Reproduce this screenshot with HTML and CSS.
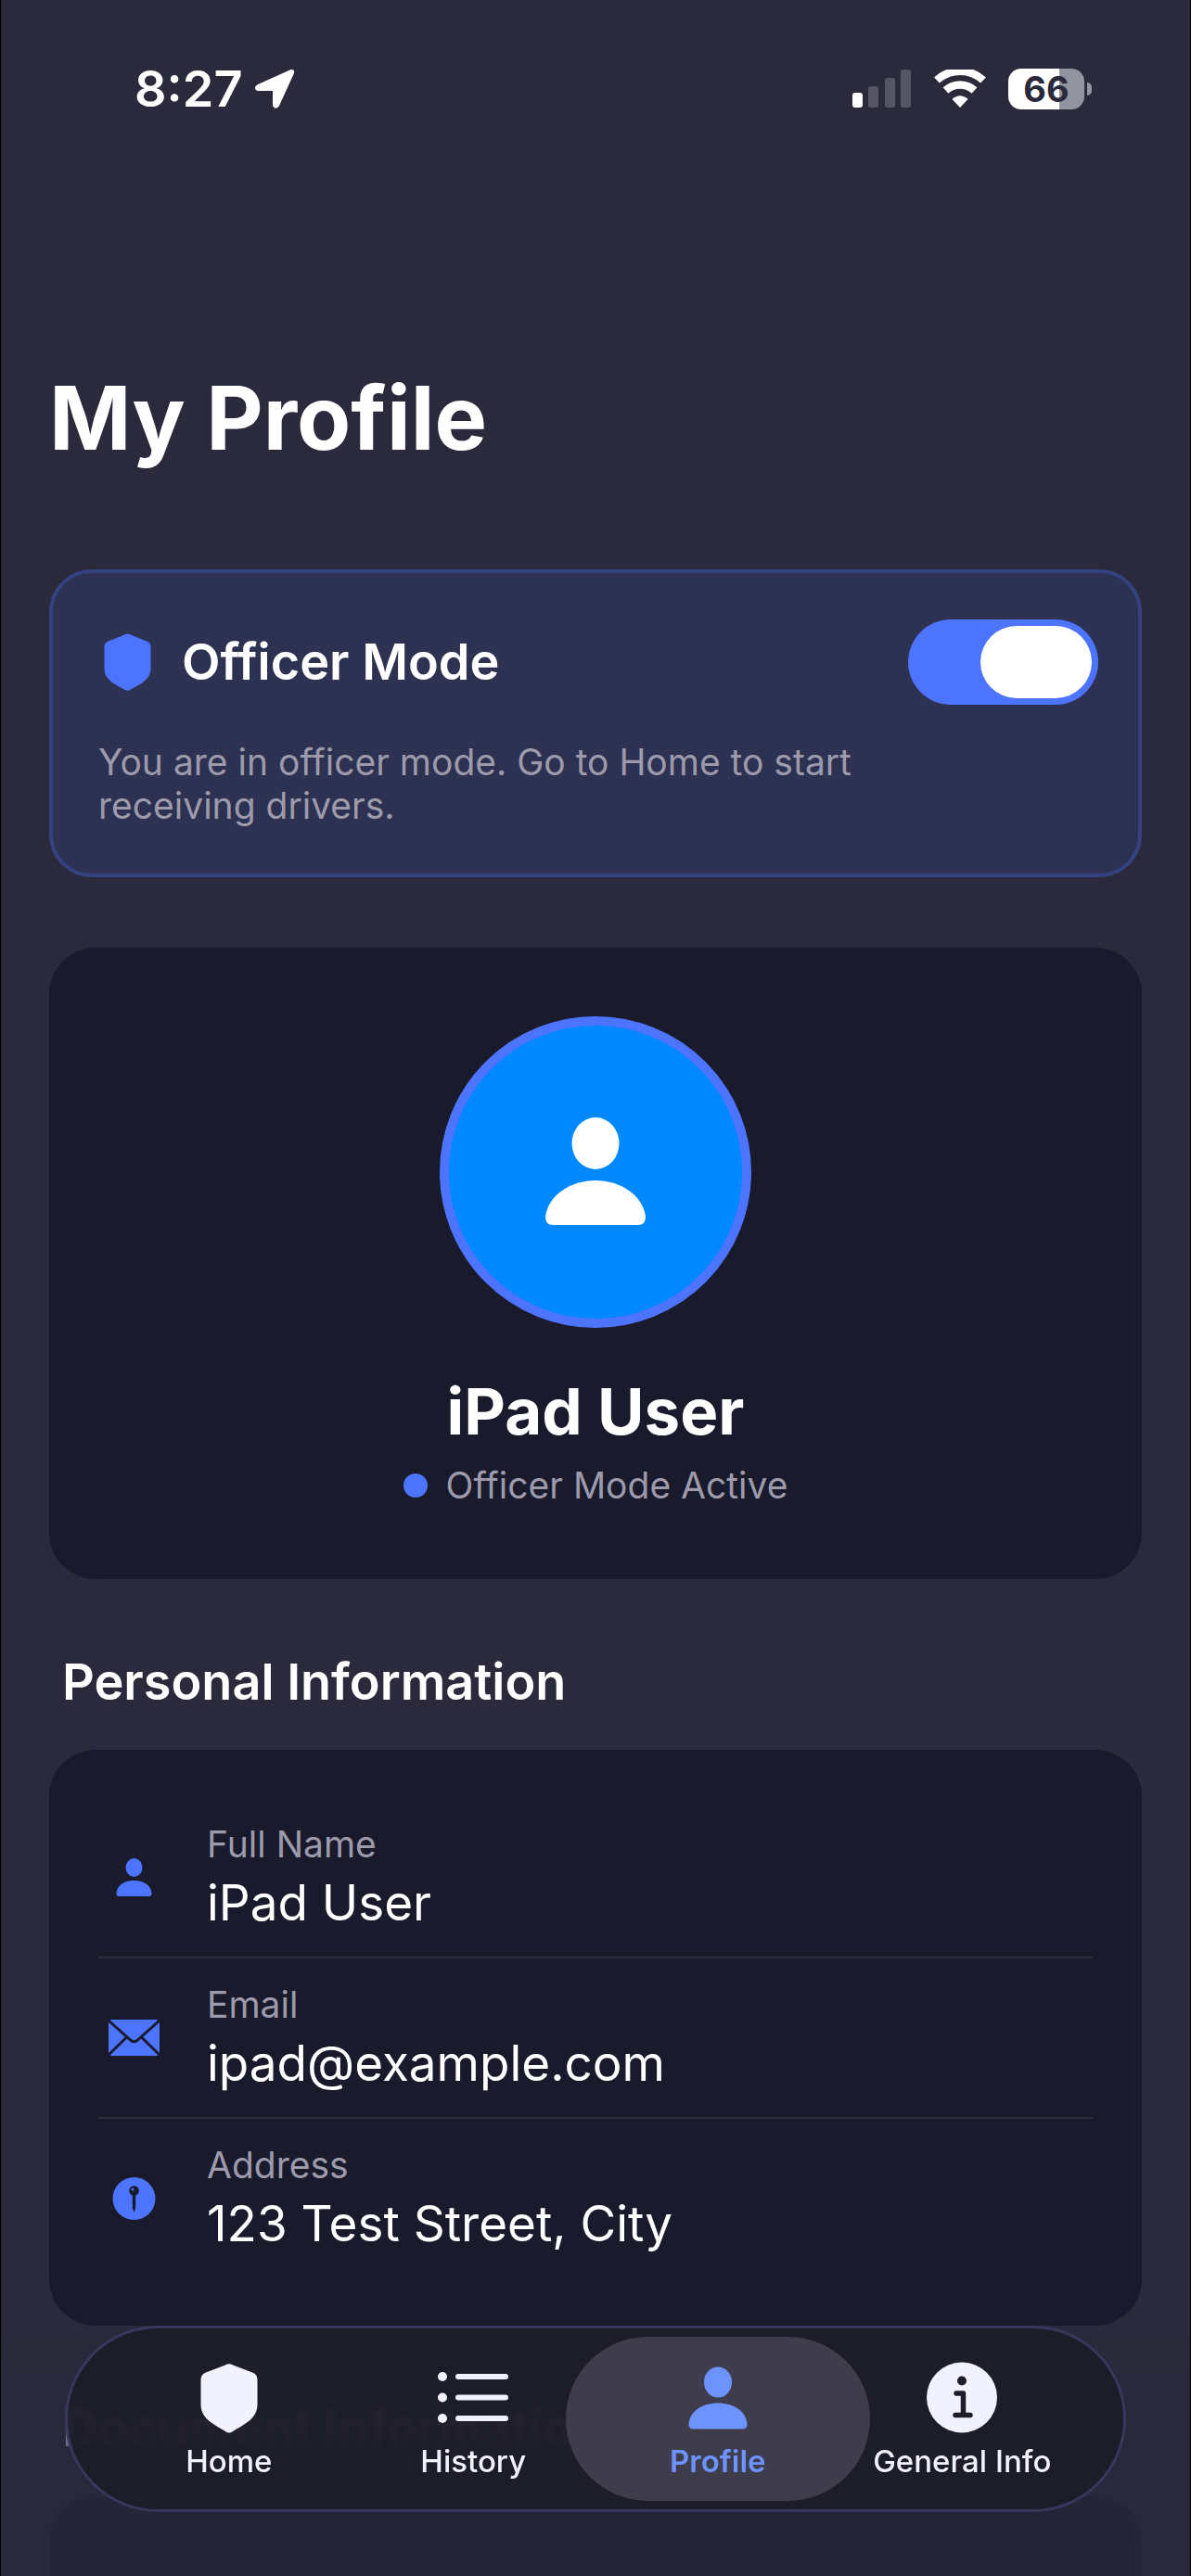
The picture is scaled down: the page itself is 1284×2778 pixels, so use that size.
FILE: index.html
```html
<!DOCTYPE html>
<html lang="en">
<head>
  <meta charset="UTF-8" />
  <meta name="viewport" content="width=device-width, initial-scale=1.0"/>
  <title>My Profile</title>
  <link rel="stylesheet" href="styles.css">
</head>
<body>

<header class="status-bar">
  <div class="status-left">
    <span class="time">8:27</span>
    <svg class="location" width="44" height="44" viewBox="0 0 44 44" fill="#fff"><path d="M39 1.200Q44 0 43 5L27 40Q24.500 44 21.500 42Q20 41 20 38V24H5Q1 24 1 20.500Q1 18.500 4 17Z"/></svg>
  </div>
  <div class="status-right">
    <svg width="64" height="42" viewBox="0 0 64 42" fill="#fff">
      <rect x="0" y="25" width="11" height="16" rx="3"/>
      <g opacity="0.2">
        <rect x="17" y="18" width="11" height="23" rx="3"/>
        <rect x="35" y="9" width="11" height="32" rx="3"/>
        <rect x="52" y="0" width="11" height="41" rx="3"/>
      </g>
    </svg>
    <svg width="56" height="42" viewBox="0 0 56 42">
      <path d="M3 11.500C17-1.500 39-1.500 53 11.500M12.500 22.500C21.500 14.500 34.500 14.500 43.500 22.500" fill="none" stroke="#fff" stroke-width="8.500"/>
      <path d="M28 41L19.500 32Q28 24.500 36.500 32Z" fill="#fff"/>
    </svg>
    <div class="battery"><span class="battery-level">66</span></div>
  </div>
</header>

<main>
  <h1>My Profile</h1>

  <section class="mode-card">
    <div class="mode-row">
      <svg width="62" height="62" viewBox="0 0 62 62" fill="#4d74ff"><path d="M27 2Q31.500-1 36 2L52 8.500Q56.500 10 56.500 14V38C56.500 50 45 55 35 60.500Q31.500 63 28 60.500C18 55 6.500 50 6.500 38V14Q6.500 10 11 8.500Z"/></svg>
      <label for="officerMode">Officer Mode</label>
      <input type="checkbox" class="toggle" id="officerMode" checked />
    </div>
    <p>You are in officer mode. Go to Home to start receiving drivers.</p>
  </section>

  <section class="card user-card">
    <div class="avatar">
      <svg width="108" height="118" viewBox="0 0 108 118" fill="#fff">
        <ellipse cx="54" cy="28" rx="25.500" ry="28"/>
        <path d="M8 116Q0 116 0 107C3 84 27 68 54 68S105 84 108 107Q108 116 100 116Z"/>
      </svg>
    </div>
    <h2>iPad User</h2>
    <div class="user-status"><span class="dot"></span>Officer Mode Active</div>
  </section>

  <h3>Personal Information</h3>
  <section class="card info-card">
    <div class="info-row">
      <svg width="77" height="42" viewBox="0 0 77 42" fill="#4d74ff">
        <ellipse cx="38.500" cy="10" rx="9" ry="10"/>
        <path d="M22 41Q19.500 41 19.500 38C20 29 28 24 38.500 24S57 29 57.500 38Q57.500 41 55 41Z"/>
      </svg>
      <div>
        <div class="label">Full Name</div>
        <div class="value">iPad User</div>
      </div>
    </div>
    <div class="info-row">
      <svg width="77" height="40" viewBox="0 0 77 40">
        <rect x="11" y="0" width="55" height="39" rx="4" fill="#4d74ff"/>
        <path d="M11 1L34 21.500Q38.500 26 43 21.500L66 1M11 38L30.500 19M66 38L46.500 19" fill="none" stroke="#1a1a2d" stroke-width="3"/>
      </svg>
      <div>
        <div class="label">Email</div>
        <div class="value">ipad@example.com</div>
      </div>
    </div>
    <div class="info-row">
      <svg width="77" height="46" viewBox="0 0 77 46">
        <circle cx="38.500" cy="23" r="23" fill="#4d74ff"/>
        <circle cx="38.500" cy="14.500" r="5.300" fill="#1a1a2d"/>
        <path d="M36.800 18H40.200V33L38.500 38L36.800 33Z" fill="#1a1a2d"/>
        <circle cx="37" cy="13" r="1.500" fill="#4d74ff"/>
      </svg>
      <div>
        <div class="label">Address</div>
        <div class="value">123 Test Street, City</div>
      </div>
    </div>
  </section>

  <h3>Document Information</h3>
  <section class="card next-card"></section>
</main>

<div class="fade"></div>

<nav class="tab-bar">
  <a href="#home" class="tab">
    <svg width="62" height="77" viewBox="0 0 62 77" fill="#f1f1ff"><path d="M27 3.500Q31 1 35 3.500L56 11.500Q61.500 13.500 61.500 19V46C61.500 61 48 67 35 75Q31 78 27 75C14 67 .5 61 .5 46V19Q.5 13.500 6 11.500Z"/></svg>
    <span>Home</span>
  </a>
  <a href="#history" class="tab">
    <svg width="76" height="77" viewBox="0 0 76 77" fill="#f1f1ff">
      <circle cx="5" cy="16" r="5"/><rect x="19" y="13" width="57" height="6" rx="3"/>
      <circle cx="5" cy="38.500" r="5"/><rect x="19" y="35.500" width="57" height="6" rx="3"/>
      <circle cx="5" cy="61" r="5"/><rect x="19" y="58" width="57" height="6" rx="3"/>
    </svg>
    <span>History</span>
  </a>
  <a href="#profile" class="tab active">
    <svg width="64" height="77" viewBox="0 0 64 77" fill="#6c93ff">
      <ellipse cx="32" cy="22" rx="15" ry="16.500"/>
      <path d="M5.500 72.500Q.5 72.500 .5 67C2 53 15 44.500 32 44.500S62 53 63.500 67Q63.500 72.500 58.500 72.500Z"/>
    </svg>
    <span>Profile</span>
  </a>
  <a href="#info" class="tab">
    <svg width="76" height="77" viewBox="0 0 76 77">
      <circle cx="38" cy="38.500" r="38" fill="#f1f1ff"/>
      <circle cx="38" cy="20.500" r="5" fill="#1e1d29"/>
      <path d="M32 34H39.500V57M31 57.500H47" fill="none" stroke="#1e1d29" stroke-width="5.500" stroke-linecap="round" stroke-linejoin="round"/>
    </svg>
    <span>General Info</span>
  </a>
</nav>

</body>
</html>
```
FILE: styles.css
```css
:root {
  --bg: #2a2a3c;
  --card: #1a1a2d;
  --blue: #4d74ff;
  --muted: #9d9bab;
  --white: #fff;
}

* {
  box-sizing: border-box;
  margin: 0;
  padding: 0;
}

body {
  display: flex;
  flex-direction: column;
  min-height: 100vh;
  background: var(--bg);
  border-left: 1px solid #000;
  border-right: 1px solid #000;
  color: var(--white);
  font-family: Inter, "Liberation Sans", sans-serif;
}

svg {
  display: block;
  flex-shrink: 0;
}

/* status bar */
.status-bar {
  display: flex;
  justify-content: space-between;
  padding: 64px 114px 0 144px;
}

.status-left,
.status-right {
  display: flex;
  align-items: center;
  height: 64px;
}

.status-left {
  gap: 12px;
}

.status-right {
  gap: 24px;
}

.time {
  font-size: 54px;
  line-height: 64px;
  font-weight: 600;
}

.battery {
  position: relative;
  width: 82px;
  height: 44px;
  border-radius: 14px;
  background: linear-gradient(to right, #fff 67%, #9494a0 67%);
}

.battery::after {
  content: "";
  position: absolute;
  right: -8px;
  top: 15px;
  width: 5px;
  height: 14px;
  border-radius: 0 5px 5px 0;
  background: #9494a0;
}

.battery-level {
  display: block;
  text-align: center;
  color: var(--bg);
  font-size: 38px;
  line-height: 44px;
  font-weight: 700;
}

/* page content */
main {
  display: flex;
  flex-direction: column;
  flex: 1;
  padding: 0 52px;
}

h1 {
  margin: 263px 0 103px;
  font-size: 95px;
  line-height: 120px;
  font-weight: 700;
}

h3 {
  margin: 79px 14px 41px;
  font-size: 54px;
  line-height: 64px;
  font-weight: 600;
}

.mode-card {
  padding: 50px 49px;
  border: 4px solid #354280;
  border-radius: 46px;
  background: #2d3152;
}

.mode-row {
  display: flex;
  align-items: center;
  gap: 28px;
  margin-right: -6px;
}

.mode-row label {
  flex: 1;
  font-size: 54px;
  line-height: 64px;
  font-weight: 600;
}

.toggle {
  appearance: none;
  display: flex;
  justify-content: flex-end;
  width: 205px;
  height: 92px;
  padding: 7px;
  border-radius: 46px;
  background: var(--blue);
  cursor: pointer;
}

.toggle::before {
  content: "";
  width: 120px;
  height: 78px;
  border-radius: 39px;
  background: var(--white);
}

.toggle:not(:checked) {
  justify-content: flex-start;
  background: #4a4a5c;
}

.mode-card p {
  max-width: 900px;
  margin-top: 38px;
  color: var(--muted);
  font-size: 39px;
  line-height: 47px;
}

.card {
  border-radius: 50px;
  background: var(--card);
}

.user-card {
  display: flex;
  flex-direction: column;
  align-items: center;
  margin-top: 76px;
  padding: 74px 53px 78px;
}

.avatar {
  display: flex;
  align-items: center;
  justify-content: center;
  width: 336px;
  height: 336px;
  border: 10px solid var(--blue);
  border-radius: 50%;
  background: #0088ff;
}

h2 {
  margin: 48px 0 14px;
  font-size: 69px;
  line-height: 84px;
  font-weight: 700;
}

.user-status {
  display: flex;
  align-items: center;
  gap: 20px;
  color: var(--muted);
  font-size: 39px;
  line-height: 47px;
}

.dot {
  width: 26px;
  height: 26px;
  border-radius: 50%;
  background: var(--blue);
}

.info-card {
  padding: 52px 53px;
}

.info-row {
  display: flex;
  align-items: center;
  gap: 40px;
  padding: 26px 0;
  border-bottom: 2px solid #302f3d;
}

.info-row:last-child {
  border-bottom: none;
}

.label {
  margin-bottom: 8px;
  color: var(--muted);
  font-size: 39px;
  line-height: 47px;
}

.value {
  font-size: 53px;
  line-height: 64px;
}

.next-card {
  flex: 1;
  border-radius: 50px 50px 0 0;
}

/* bottom tabs */
.fade {
  position: fixed;
  left: 1px;
  right: 1px;
  bottom: 0;
  height: 260px;
  background: linear-gradient(to bottom, rgba(40, 41, 60, 0), rgba(40, 41, 60, 0.75) 50%);
}

.tab-bar {
  position: fixed;
  left: 70px;
  right: 70px;
  bottom: 69px;
  display: flex;
  padding: 9px 42px;
  border: 3px solid #38385e;
  border-radius: 101px;
  background: rgba(29, 28, 40, 0.94);
  backdrop-filter: blur(3px);
}

.tab {
  position: relative;
  display: flex;
  flex: 1;
  flex-direction: column;
  align-items: center;
  gap: 10px;
  height: 177px;
  padding-top: 27px;
  color: #f1f1ff;
  font-size: 33px;
  line-height: 40px;
  font-weight: 500;
  text-decoration: none;
  white-space: nowrap;
}

.tab.active {
  color: #6c93ff;
  font-weight: 600;
}

.tab.active::before {
  content: "";
  position: absolute;
  inset: 0 -32px;
  z-index: -1;
  border-radius: 89px;
  background: #3f3d4c;
}
```
